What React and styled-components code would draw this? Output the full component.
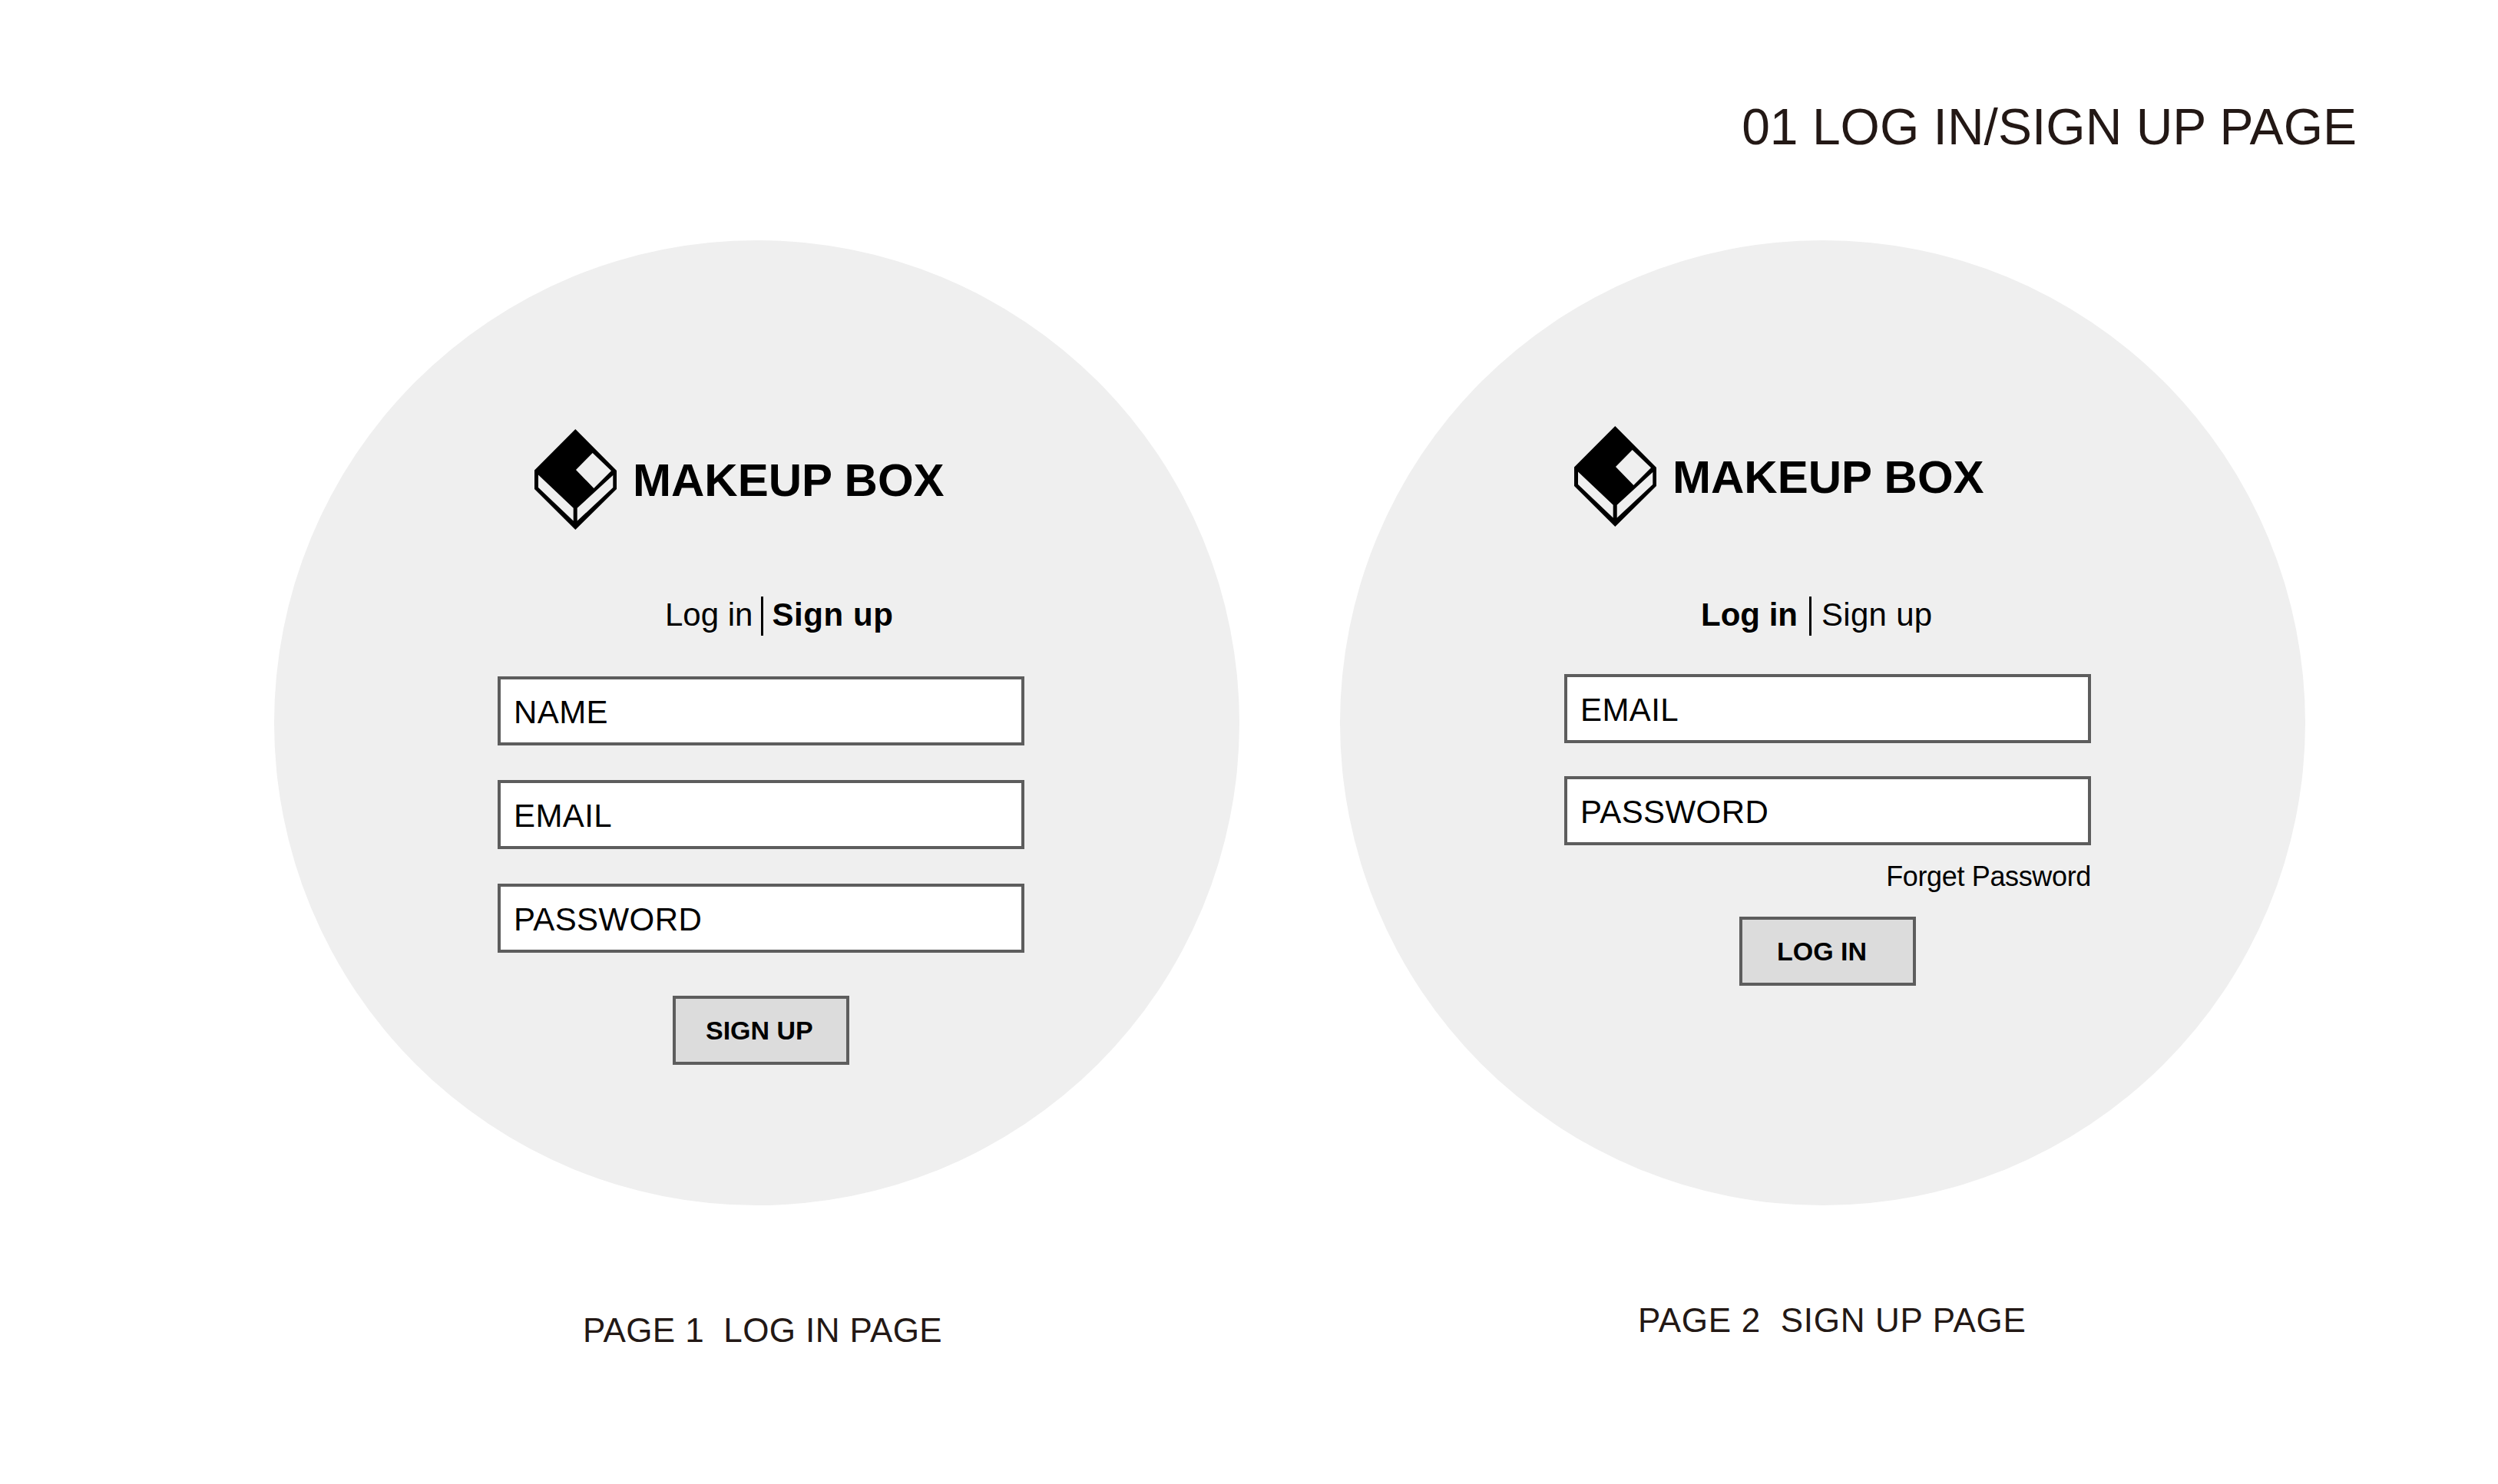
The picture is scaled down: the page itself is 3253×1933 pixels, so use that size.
import React from 'react'
import styled, { createGlobalStyle } from 'styled-components'

const GlobalStyle = createGlobalStyle`
  html, body {
    margin: 0;
    padding: 0;
    background: #fff;
  }
  body {
    font-family: "Liberation Sans", Arial, sans-serif;
    color: #000;
  }
`;

const Page = styled.div`
  width: 3253px;
  height: 1933px;
  overflow: hidden;
  box-sizing: border-box;
  padding-top: 127px;
`;

const Heading = styled.h1`
  margin: 0;
  padding-right: 184px;
  text-align: right;
  font-size: 66px;
  line-height: 76px;
  font-weight: 400;
  color: #231815;
`;

const Boards = styled.div`
  display: flex;
  gap: 131px;
  margin-top: 110px;
  padding-left: 357px;
`;

const Board = styled.section`
  width: 1257px;
`;

const Circle = styled.div`
  width: 1257px;
  height: 1257px;
  box-sizing: border-box;
  border-radius: 50%;
  background: #efefef;
  padding-top: ${(props) => props.$top}px;
  display: flex;
  flex-direction: column;
`;

const Brand = styled.div`
  display: flex;
  align-items: center;
  gap: 21px;
  height: 131px;
  margin-left: ${(props) => props.$left}px;
`;

const BrandName = styled.span`
  font-size: 60px;
  font-weight: 700;
  line-height: 1;
  padding-top: 2px;
`;

const Tabs = styled.div`
  display: flex;
  align-items: center;
  height: 51px;
  margin-top: ${(props) => props.$gap}px;
  margin-left: ${(props) => props.$left}px;
`;

const Tab = styled.span`
  font-size: 42px;
  line-height: 47px;
  padding-bottom: 4px;
  font-weight: ${(props) => (props.$active ? 700 : 400)};
  letter-spacing: ${(props) => props.$tracking || 0}px;
`;

const TabDivider = styled.span`
  width: 3px;
  height: 51px;
  background: #000;
  margin: 0 ${(props) => props.$before}px 0 ${(props) => props.$after}px;
`;

const Form = styled.div`
  width: 686px;
  margin-top: ${(props) => props.$gap}px;
  margin-left: ${(props) => props.$left}px;
  display: flex;
  flex-direction: column;
  gap: ${(props) => props.$rowGap}px;
`;

const Field = styled.div`
  height: 90px;
  box-sizing: border-box;
  border: 4px solid #5d5d5d;
  background: #fff;
  padding: 3px 0 0 17px;
  display: flex;
  align-items: center;
  font-size: 42px;
  letter-spacing: 0.4px;
  line-height: 1;
`;

const FieldGroup = styled.div`
  display: flex;
  flex-direction: column;
`;

const ForgotLink = styled.span`
  align-self: flex-end;
  margin-top: 21px;
  font-size: 36px;
  line-height: 40px;
  letter-spacing: -0.35px;
`;

const SubmitButton = styled.div`
  align-self: center;
  width: 230px;
  height: 90px;
  box-sizing: border-box;
  border: 4px solid #5d5d5d;
  background: #dcdcdc;
  margin-top: ${(props) => props.$gap}px;
  padding-left: ${(props) => props.$inset}px;
  display: flex;
  align-items: center;
  font-size: 34px;
  font-weight: 700;
  line-height: 1;
`;

const Caption = styled.p`
  margin: ${(props) => props.$gap}px 0 0 ${(props) => props.$left}px;
  font-size: 44px;
  line-height: 50px;
  letter-spacing: ${(props) => props.$tracking}px;
  white-space: pre;
  color: #231815;
`;

function BoxLogo() {
  return (
    <svg width="107" height="131" viewBox="0 0 107 131" aria-hidden="true">
      <path
        fillRule="evenodd"
        fill="#000"
        d="M53.3 0 L107 54 L107 78 L53.3 131 L0 78 L0 53.5 Z
           M54 53 L75.7 31 L100 54.3 L77.3 77 Z
           M5 59.5 L50.7 102.7 L50.7 119.5 L5 76 Z
           M55.7 119.5 L55.7 102.7 L102.3 60 L102.3 76 Z"
      />
    </svg>
  )
}

function Board1() {
  return (
    <Board>
      <Circle $top={246}>
        <Brand $left={339}>
          <BoxLogo />
          <BrandName>MAKEUP BOX</BrandName>
        </Brand>
        <Tabs $gap={87} $left={509}>
          <Tab>Log in</Tab>
          <TabDivider $after={11} $before={11} />
          <Tab $active $tracking={0.6}>Sign up</Tab>
        </Tabs>
        <Form $gap={53} $left={291} $rowGap={45}>
          <Field>NAME</Field>
          <Field>EMAIL</Field>
          <Field>PASSWORD</Field>
          <SubmitButton $gap={11} $inset={39}>SIGN UP</SubmitButton>
        </Form>
      </Circle>
      <Caption $gap={138} $left={402} $tracking={0.4}>PAGE 1  LOG IN PAGE</Caption>
    </Board>
  )
}

function Board2() {
  return (
    <Board>
      <Circle $top={242}>
        <Brand $left={305}>
          <BoxLogo />
          <BrandName>MAKEUP BOX</BrandName>
        </Brand>
        <Tabs $gap={91} $left={470}>
          <Tab $active>Log in</Tab>
          <TabDivider $after={15} $before={13} />
          <Tab $tracking={0.3}>Sign up</Tab>
        </Tabs>
        <Form $gap={50} $left={292} $rowGap={43}>
          <Field>EMAIL</Field>
          <FieldGroup>
            <Field>PASSWORD</Field>
            <ForgotLink>Forget Password</ForgotLink>
            <SubmitButton $gap={32} $inset={45}>LOG IN</SubmitButton>
          </FieldGroup>
        </Form>
      </Circle>
      <Caption $gap={125} $left={388} $tracking={0.7}>PAGE 2  SIGN UP PAGE</Caption>
    </Board>
  )
}

export default function App() {
  return (
    <>
      <GlobalStyle />
      <Page>
        <Heading>01 LOG IN/SIGN UP PAGE</Heading>
        <Boards>
          <Board1 />
          <Board2 />
        </Boards>
      </Page>
    </>
  )
}
